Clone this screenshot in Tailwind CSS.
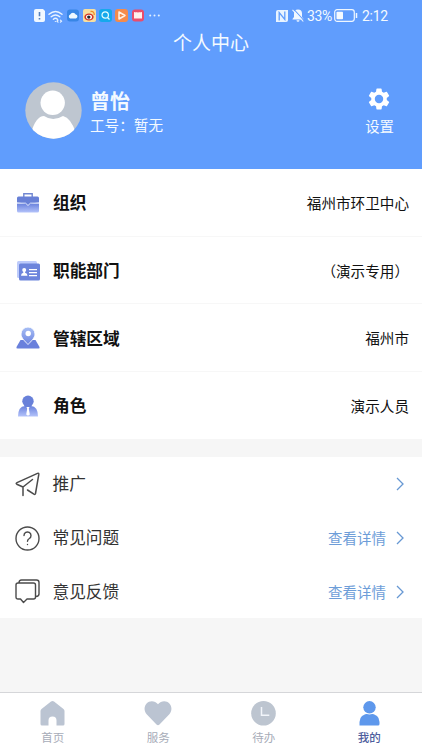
<!DOCTYPE html>
<html lang="zh-CN">
<head>
<meta charset="utf-8">
<meta name="viewport" content="width=device-width, initial-scale=1">
<title>个人中心</title>
<script src="https://cdn.jsdelivr.net/npm/@tailwindcss/browser@4"></script>
</head>
<body class="bg-[#f6f6f6] font-['Noto_Sans_CJK_SC',sans-serif]">
<svg class="absolute h-0 w-0" aria-hidden="true">
  <defs>
    <linearGradient id="fade" x1="0" y1="0" x2="0" y2="1"><stop offset="0" stop-color="#6a82dd"/><stop offset="1" stop-color="#b4c3fa"/></linearGradient>
    <linearGradient id="rise" x1="0" y1="0" x2="0" y2="1"><stop offset="0" stop-color="#a9c0f5"/><stop offset="1" stop-color="#6c83e0"/></linearGradient>
  </defs>
</svg>
<div class="flex h-[751px] w-[422px] flex-col overflow-hidden">
  <header class="h-[168.5px] shrink-0 bg-[#609dfd] text-[#f4faff]">
    <div class="flex h-[31px] items-center justify-between pl-[34px] pr-[34px]">
      <div class="flex items-center gap-[3px]">
        <svg class="h-[13px] w-[11px]" viewBox="0 0 11 13"><path d="M2 0h7l2 2v9a2 2 0 0 1-2 2H2a2 2 0 0 1-2-2V2a2 2 0 0 1 2-2z" fill="#f1f8ff"/><path d="M5.500 3v4.300M5.500 9v1.500" stroke="#5580bd" stroke-width="1.600"/></svg>
        <svg class="mt-px h-[13px] w-[15px]" viewBox="0 0 15 13" fill="none" stroke="#e8f3ff" stroke-width="1.400" stroke-linecap="round"><path d="M1 4.200q6.500-5.600 13 0M3.200 6.800q4.300-3.600 8.600 0M5.400 9.200q2.100-1.700 4 0"/><path d="M7.300 11.500h.1M10 10.200l-1 1 1 1M12.500 10.200l1 1-1 1" stroke-width="1.200"/></svg>
        <svg class="ml-px h-[13px] w-[12px]" viewBox="0 0 12 13"><rect y=".5" width="12" height="12" rx="3" fill="#3886e5"/><path d="M3.200 9.400a2 2 0 0 1 0-3.800 3 3 0 0 1 5.500-.1 2 2 0 0 1 .3 3.900z" fill="#eef8ff"/></svg>
        <svg class="ml-px h-[13px] w-[13px]" viewBox="0 0 13 13"><rect width="13" height="13" rx="2" fill="#f7dfa0"/><ellipse cx="6" cy="8" rx="4.700" ry="3.500" fill="#d43527"/><ellipse cx="6" cy="8" rx="3" ry="2.300" fill="#fff"/><circle cx="5.800" cy="8.100" r="1.700" fill="#252326"/><path d="M7.500 2.500q4-.5 3.700 3.500" fill="none" stroke="#ee8c26" stroke-width="1.300"/></svg>
        <svg class="h-[13px] w-[13px]" viewBox="0 0 13 13"><rect width="13" height="13" rx="3" fill="#16a9ec"/><circle cx="6.200" cy="6" r="3.200" fill="none" stroke="#e8ffff" stroke-width="1.200"/><path d="m8.500 8.500 2 2" stroke="#e8ffff" stroke-width="1.300"/></svg>
        <svg class="h-[13px] w-[13px]" viewBox="0 0 13 13"><rect width="13" height="13" rx="3" fill="#f58b4b"/><path d="M4 3v7l6-3.500z" fill="none" stroke="#fff2e5" stroke-width="1.500" stroke-linejoin="round"/></svg>
        <svg class="ml-px h-[13px] w-[12px]" viewBox="0 0 12 13"><rect y=".5" width="12" height="12" rx="3" fill="#e94d6d"/><path d="M2 3.200q1-.7 2 .2.900-.9 2 .3 1.100-1.200 2-.3 1-.9 2-.2v6.300H2z" fill="#fff0ee"/></svg>
        <svg class="ml-[2px] h-[3px] w-[11px]" viewBox="0 0 11 3" fill="#e4f1ff"><circle cx="1.200" cy="1.500" r="1"/><circle cx="5.500" cy="1.500" r="1"/><circle cx="9.800" cy="1.500" r="1"/></svg>
      </div>
      <div class="flex items-center font-['Roboto',sans-serif] text-[14px] leading-none">
        <svg class="mr-[4px] h-[12px] w-[12px]" viewBox="0 0 12 12"><path d="M2 0h10v10a2 2 0 0 1-2 2H0V2a2 2 0 0 1 2-2z" fill="#e9f4ff"/><path d="M3.200 10.500V2.500l5.600 7V1.500" fill="none" stroke="#609dfd" stroke-width="1.300"/></svg>
        <svg class="mr-[3px] h-[13px] w-[12px]" viewBox="0 0 12 13"><path d="M6 .5a4 4 0 0 0-4 4V8L.5 10v.6h11V10L10 8V4.500a4 4 0 0 0-4-4zM4.500 11.300h3a1.500 1.500 0 0 1-3 0z" fill="#f1f8ff"/><path d="m1.500 0 10.500 11.500" stroke="#609dfd" stroke-width="1.100"/><path d="m.5.8 10.800 11.700" stroke="#f1f8ff" stroke-width="1.100"/></svg>
        <span class="w-[26px] whitespace-nowrap tracking-[-0.4px]">33%</span>
        <svg class="ml-px mr-[4px] h-[13px] w-[24px]" viewBox="0 0 24 13"><rect x=".7" y=".7" width="19.600" height="11.600" rx="2.500" fill="none" stroke="#eff7ff" stroke-width="1.200"/><rect x="2.500" y="2.700" width="6.500" height="7.600" rx=".8" fill="#f5faff"/><path d="M22.500 4v5" stroke="#eff7ff" stroke-width="1.500"/></svg>
        <span class="w-[26px] whitespace-nowrap tracking-[-0.3px]">2:12</span>
      </div>
    </div>
    <h1 class="h-[21px] text-center text-[19px] leading-[21px]">个人中心</h1>
    <div class="flex pl-[24.5px] pr-[28px] pt-[30px]">
      <svg class="h-[57px] w-[57px] shrink-0" viewBox="0 0 57 57"><defs><clipPath id="face"><circle cx="28.500" cy="28.500" r="28.200"/></clipPath></defs><circle cx="28.500" cy="28.500" r="28.200" fill="#bec6d0"/><g clip-path="url(#face)" fill="#fff"><path d="M6 51Q11 34 19 34Q28 40 38 34Q46 36 51 51V58H6z"/><circle cx="28" cy="21" r="13" fill="#bec6d0"/><circle cx="27.700" cy="20.800" r="12.200"/></g></svg>
      <div class="ml-[8.500px] pt-[7px]">
        <p class="text-[20px] font-bold leading-[24px]">曾怡</p>
        <p class="mt-px text-[14.6px] leading-[22px]">工号：暂无</p>
      </div>
      <div class="ml-auto flex flex-col items-center pt-[4px]">
        <svg class="mr-px h-[26px] w-[26px]" viewBox="0 0 24 24" fill="#fff"><path d="M19.140 12.940c.04-.3.060-.61.060-.94s-.020-.64-.070-.94l2.030-1.580a.49.490 0 0 0 .12-.61l-1.920-3.320a.49.490 0 0 0-.59-.22l-2.390.96a7 7 0 0 0-1.620-.94l-.36-2.540a.48.480 0 0 0-.48-.41h-3.840a.47.470 0 0 0-.47.410l-.36 2.540a7.400 7.400 0 0 0-1.620.94l-2.390-.96a.48.480 0 0 0-.59.220L2.740 8.870a.47.470 0 0 0 .12.610l2.030 1.580a6.300 6.300 0 0 0 0 1.880l-2.030 1.580a.49.490 0 0 0-.12.610l1.920 3.320c.12.220.37.290.59.220l2.390-.96c.5.380 1.030.7 1.620.94l.36 2.540c.05.240.24.410.48.410h3.840c.24 0 .44-.17.470-.41l.36-2.540a7.400 7.400 0 0 0 1.620-.94l2.390.96c.22.080.47 0 .59-.22l1.920-3.320a.47.470 0 0 0-.12-.61zM12 15.900a3.900 3.900 0 1 1 0-7.800 3.900 3.900 0 0 1 0 7.800z"/></svg>
        <span class="mt-[3px] text-[14.4px] leading-[22px]">设置</span>
      </div>
    </div>
  </header>

  <main class="flex-1">
    <section class="divide-y divide-[#f7f7f7] bg-white text-[#111]">
      <div class="flex h-[68px] items-center pl-4 pr-[13px] pt-[2px]">
        <svg class="h-6 w-6" viewBox="0 0 24 24"><path d="M7.800 6V2.700h8.400V6" fill="none" stroke="#7187d2" stroke-width="1.400"/><path d="M2.500 5.500h19a1.500 1.500 0 0 1 1.500 1.500v4.500l-9 1-2 2-2-2-9-1V7a1.500 1.500 0 0 1 1.500-1.500z" fill="#6880d6"/><path d="M1 12.500h8.700l2.300 2.300 2.300-2.300H23V20a1.500 1.500 0 0 1-1.500 1.500h-19A1.500 1.500 0 0 1 1 20z" fill="url(#fade)"/><path d="M1 12h8.500l2.500 2.400 2.500-2.400H23" fill="none" stroke="#e1e9ff" stroke-width=".7"/></svg>
        <h2 class="ml-[13px] text-[16.7px] font-bold">组织</h2><span class="ml-auto text-[14.6px]">福州市环卫中心</span>
      </div>
      <div class="flex h-[67.5px] items-center pl-4 pr-[13px] pt-[2px]">
        <svg class="h-6 w-6" viewBox="0 0 24 24"><rect x="1" y="2" width="20" height="17" rx="1.500" fill="#bdcbfb"/><rect x="3" y="4.500" width="21" height="17" rx="1.500" fill="#6d85dc"/><circle cx="8.200" cy="11" r="2" fill="#fff"/><path d="M7.300 12h1.800v1.800q2.400.3 2.400 2.900H5q0-2.600 2.300-2.900zM13 10h8v1.300h-8zM13 13h8v1.300h-8zM13 16h8v1.300h-8z" fill="#fff"/></svg>
        <h2 class="ml-[13px] text-[16.7px] font-bold">职能部门</h2><span class="ml-auto text-[14.6px]">（演示专用）</span>
      </div>
      <div class="flex h-[67.5px] items-center pl-4 pr-[13px] pt-[2px]">
        <svg class="h-6 w-6" viewBox="0 0 24 24"><path d="M4.500 14h15l4 7q.5 1.500-1 1.500h-21q-1.500 0-1-1.500z" fill="#6980dc"/><path d="M12 1a7 7 0 0 1 7 7c0 4-4 7.300-7 10.500C9 15.300 5 12 5 8a7 7 0 0 1 7-7z" fill="url(#rise)" stroke="#fff" stroke-width=".9"/><circle cx="12.200" cy="7.500" r="2.700" fill="#fff"/></svg>
        <h2 class="ml-[13px] text-[16.7px] font-bold">管辖区域</h2><span class="ml-auto text-[14.6px]">福州市</span>
      </div>
      <div class="flex h-[67.5px] items-center pl-4 pr-[13px] pt-px">
        <svg class="h-6 w-6" viewBox="0 0 24 24"><path d="M2 22.500q0-10 7-10.500h6q7 .5 7 10.500z" fill="url(#fade)"/><circle cx="12" cy="7.200" r="5.700" fill="#6880d9"/><path d="M10.500 13h3l-.7 1.800 1 5.700-1.800 1.300-1.800-1.300 1-5.700z" fill="#fff"/></svg>
        <h2 class="ml-[13px] text-[16.7px] font-bold">角色</h2><span class="ml-auto text-[14.6px]">演示人员</span>
      </div>
    </section>

    <section class="mt-[18px] bg-white text-[#333]">
      <div class="flex h-[54px] items-center pl-[15px] pr-[17px]">
        <svg class="h-[25px] w-[25px]" viewBox="0 0 25 25" fill="none" stroke="#4b4b4b" stroke-width="1.500" stroke-linecap="round" stroke-linejoin="round"><path d="M8 23.500V15L1.800 12.200q-1.300-.8.200-1.600L22.500 1.400q1.500-.4 1.300 1L20.500 21.500q-.4 1.400-1.600.7L12.500 18M8 15 17.500 7.500"/></svg>
        <span class="ml-[12.5px] text-[16.7px]">推广</span>
        <svg class="ml-auto h-[14px] w-[10px]" viewBox="0 0 10 14" fill="none" stroke="#6798d3" stroke-width="1.300"><path d="m2 1 6 6-6 6"/></svg>
      </div>
      <div class="flex h-[54px] items-center pl-[15px] pr-[17px]">
        <svg class="h-[25px] w-[25px]" viewBox="0 0 25 25" fill="none" stroke="#4b4b4b" stroke-width="1.400" stroke-linecap="round"><circle cx="12.500" cy="12.500" r="11.500"/><path d="M9 9.500a3.500 3.500 0 1 1 5.300 3q-1.800 1-1.800 2.800M12.500 18.500v.1"/></svg>
        <span class="ml-[12.5px] text-[16.7px]">常见问题</span>
        <span class="ml-auto mr-[9px] text-[14.5px] text-[#6d9dd8]">查看详情</span>
        <svg class="h-[14px] w-[10px]" viewBox="0 0 10 14" fill="none" stroke="#6798d3" stroke-width="1.300"><path d="m2 1 6 6-6 6"/></svg>
      </div>
      <div class="flex h-[53px] items-center pl-[15px] pr-[17px]">
        <svg class="h-[25px] w-[25px]" viewBox="0 0 25 25" fill="none" stroke="#4b4b4b" stroke-width="1.400" stroke-linejoin="round"><path d="M3 4h15.500q2 0 2 2V18q0 2-2 2h-6.500L8.500 23.500 5.500 20H3q-2 0-2-2V6q0-2 2-2zM4 4Q4 1 6.500 1H21.500q2.500 0 2.500 2.500V15q0 2.300-3 2.500"/></svg>
        <span class="ml-[12.5px] text-[16.7px]">意见反馈</span>
        <span class="ml-auto mr-[9px] text-[14.5px] text-[#6d9dd8]">查看详情</span>
        <svg class="h-[14px] w-[10px]" viewBox="0 0 10 14" fill="none" stroke="#6798d3" stroke-width="1.300"><path d="m2 1 6 6-6 6"/></svg>
      </div>
    </section>
  </main>

  <nav class="grid h-[59px] shrink-0 grid-cols-4 border-t border-[#d5d6d9] bg-white text-[11.5px] leading-[16px] text-[#a7acb8]">
    <div class="flex flex-col items-center pt-[7px]">
      <svg class="h-[27px] w-[27px]" viewBox="0 0 27 27"><path d="M12 1.500q1.500-1.200 3 0l9.500 7.500q1 .8 1 2v13q0 1.500-1.500 1.500h-6.500v-5q0-4-4-4t-4 4v5H3q-1.500 0-1.500-1.500V11q0-1.200 1-2z" fill="#bbc4d2"/></svg>
      <span class="mt-[2px]">首页</span>
    </div>
    <div class="flex flex-col items-center pt-[7px]">
      <svg class="h-[27px] w-[28px]" viewBox="0 0 28 27"><path d="M14 4.200C17 .5 22.500.2 25.400 3.500c3 3.400 2.500 8.200-.3 11L15.500 24.500q-1.500 1.300-3 0L2.900 14.500C.1 11.700-.4 6.900 2.600 3.500 5.500.2 11 .5 14 4.200z" fill="#bbc4d2"/></svg>
      <span class="mt-[2px]">服务</span>
    </div>
    <div class="flex flex-col items-center pt-[7px]">
      <svg class="h-[27px] w-[27px]" viewBox="0 0 27 27"><circle cx="13.500" cy="13.200" r="12.300" fill="#bdc5d0"/><path d="M11.500 7v8.300h7.800" fill="none" stroke="#f2f5fa" stroke-width="1.500"/></svg>
      <span class="mt-[2px]">待办</span>
    </div>
    <div class="flex flex-col items-center pt-[7px] text-[#4d5d9d]">
      <svg class="h-[27px] w-[27px]" viewBox="0 0 27 27" fill="#5e98ec"><path d="M3.500 25.500V22q0-8 10-8.500 10 .5 10 8.500v2q0 1.500-1.500 1.500z"/><circle cx="13.500" cy="7.500" r="7" fill="#fff"/><circle cx="13.500" cy="7.300" r="6.200"/></svg>
      <span class="mt-[2px] font-medium">我的</span>
    </div>
  </nav>
</div>
</body>
</html>
